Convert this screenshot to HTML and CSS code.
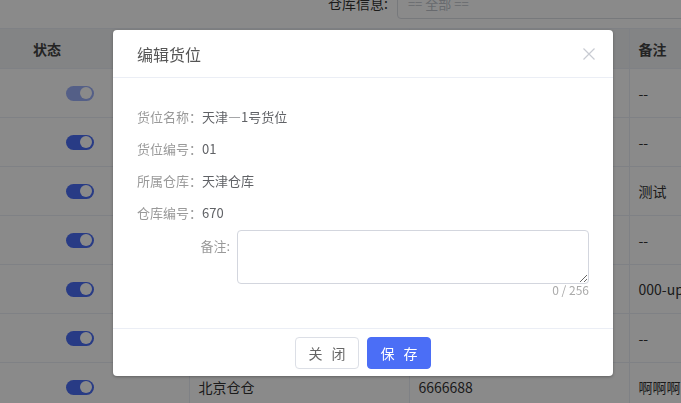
FILE: index.html
```html
<!DOCTYPE html>
<html lang="zh-CN">

<head>
	<meta charset="utf-8">
	<title>货位管理</title>
	<link rel="stylesheet" href="styles.css">
</head>

<body>
	<div class="filter-bar">
		<label class="filter-label">仓库信息:</label>
		<div class="filter-select">== 全部 ==</div>
	</div>

	<table class="grid">
		<colgroup>
			<col class="col-state">
			<col class="col-name">
			<col class="col-code">
			<col>
		</colgroup>
		<thead>
			<tr>
				<th class="state-head">状态</th>
				<th>仓库名称</th>
				<th>仓库编号</th>
				<th>备注</th>
			</tr>
		</thead>
		<tbody>
			<tr>
				<td class="state-cell"><span class="switch disabled"></span></td>
				<td>天津仓库</td>
				<td>670</td>
				<td>--</td>
			</tr>
			<tr>
				<td class="state-cell"><span class="switch"></span></td>
				<td>天津仓库</td>
				<td>670</td>
				<td>--</td>
			</tr>
			<tr>
				<td class="state-cell"><span class="switch"></span></td>
				<td>上海仓库</td>
				<td>1001</td>
				<td>测试</td>
			</tr>
			<tr>
				<td class="state-cell"><span class="switch"></span></td>
				<td>广州仓库</td>
				<td>2020</td>
				<td>--</td>
			</tr>
			<tr>
				<td class="state-cell"><span class="switch"></span></td>
				<td>深圳仓库</td>
				<td>000</td>
				<td>000-up</td>
			</tr>
			<tr>
				<td class="state-cell"><span class="switch"></span></td>
				<td>成都仓库</td>
				<td>3301</td>
				<td>--</td>
			</tr>
			<tr>
				<td class="state-cell"><span class="switch"></span></td>
				<td>北京仓仓</td>
				<td>6666688</td>
				<td>啊啊啊</td>
			</tr>
		</tbody>
	</table>

	<div class="mask"></div>

	<div class="dialog">
		<div class="dialog-header">
			<span class="dialog-title">编辑货位</span>
			<svg class="dialog-close" width="12" height="12" viewBox="0 0 12 12">
				<path d="M0.5 0.5 L11.5 11.5 M11.5 0.5 L0.5 11.5" stroke="#c8cbd2" stroke-width="1.2" fill="none"/>
			</svg>
		</div>
		<div class="dialog-body">
			<div class="info-row"><span class="info-label">货位名称：</span><span class="info-value">天津—1号货位</span></div>
			<div class="info-row"><span class="info-label">货位编号：</span><span class="info-value">01</span></div>
			<div class="info-row"><span class="info-label">所属仓库：</span><span class="info-value">天津仓库</span></div>
			<div class="info-row"><span class="info-label">仓库编号：</span><span class="info-value">670</span></div>
			<div class="form-row">
				<label class="form-label">备注:</label>
				<div class="form-field">
					<textarea class="remark"></textarea>
					<div class="word-count">0 / 256</div>
				</div>
			</div>
		</div>
		<div class="dialog-footer">
			<button class="btn">关 闭</button>
			<button class="btn btn-primary">保 存</button>
		</div>
	</div>
</body>

</html>
```

FILE: styles.css
```css
body {
	margin: 0;
	font-family: "Microsoft YaHei", "Noto Sans CJK SC", "Noto Sans", sans-serif;
	font-size: 14px;
	color: #333;
	background-color: #fff;
	overflow: hidden;
}

/* 顶部筛选 */
.filter-bar {
	display: flex;
	align-items: flex-end;
	height: 28px;
	padding-bottom: 9px;
	box-sizing: border-box;
	overflow: hidden;
	padding-left: 328px;
}

.filter-label {
	line-height: 32px;
	margin-right: 9px;
	white-space: nowrap;
}

.filter-select {
	flex: 0 0 320px;
	height: 32px;
	line-height: 32px;
	box-sizing: border-box;
	border: 1px solid #dcdfe6;
	border-radius: 4px;
	padding-left: 10px;
	color: #c0c4cc;
	font-size: 13px;
}

/* 列表 */
.grid {
	width: 100%;
	border-collapse: collapse;
	table-layout: fixed;
}

.col-state {
	width: 189px;
}

.col-name,
.col-code {
	width: 220px;
}

.grid th,
.grid td {
	border-bottom: 1px solid #ebeef5;
	border-left: 1px solid #ebeef5;
	padding: 0 9px;
	text-align: left;
	white-space: nowrap;
	overflow: hidden;
}

.grid th:first-child,
.grid td:first-child {
	border-left: none;
}

.grid th {
	height: 39px;
	background-color: #f3f4f6;
	border-top: 1px solid #ebeef5;
	font-weight: bold;
	color: #444;
}

.grid td {
	height: 48px;
	color: #333;
}

.grid .state-head {
	padding-left: 33px;
}

.grid .state-cell {
	padding-left: 66px;
}

.switch {
	display: block;
	position: relative;
	width: 28px;
	height: 15px;
	border-radius: 8px;
	background-color: #4b6ef6;
}

.switch::after {
	content: "";
	position: absolute;
	right: 2px;
	top: 1.5px;
	width: 12px;
	height: 12px;
	border-radius: 50%;
	background-color: #fff;
}

.switch.disabled {
	opacity: 0.55;
}

/* 遮罩与弹窗 */
.mask {
	position: fixed;
	inset: 0;
	background-color: rgba(0, 0, 0, 0.46);
}

.dialog {
	position: fixed;
	left: 113px;
	top: 30px;
	width: 500px;
	background-color: #fff;
	border-radius: 4px;
	box-shadow: 0 1px 3px rgba(0, 0, 0, 0.3);
}

.dialog-header {
	display: flex;
	align-items: center;
	justify-content: space-between;
	height: 47px;
	padding: 0 18px 0 24px;
	border-bottom: 1px solid #ebeef5;
}

.dialog-title {
	font-size: 16px;
	color: #555;
}

.dialog-close {
	margin-top: 1px;
}

.dialog-body {
	padding: 23px 24px 32px;
	font-size: 13px;
}

.info-row {
	line-height: 32px;
}

.info-label {
	color: #999;
}

.info-value {
	color: #606266;
}

.form-row {
	display: flex;
	margin-top: 1px;
}

.form-label {
	width: 93px;
	text-align: right;
	line-height: 32px;
	color: #999;
	margin-right: 7px;
}

.form-field {
	width: 352px;
}

.remark {
	display: block;
	width: 100%;
	height: 54px;
	box-sizing: border-box;
	border: 1px solid #d3d6de;
	border-radius: 4px;
	resize: vertical;
	font-family: inherit;
	margin: 0;
}

.word-count {
	text-align: right;
	font-size: 12px;
	line-height: 12px;
	color: #aaa;
}

.dialog-footer {
	display: flex;
	justify-content: center;
	gap: 8px;
	padding: 8px 0 7px;
	border-top: 1px solid #ebeef5;
}

.btn {
	width: 64px;
	height: 32px;
	border: 1px solid #dcdfe6;
	border-radius: 4px;
	background-color: #fff;
	color: #666;
	font-family: inherit;
	font-size: 14px;
	letter-spacing: 3px;
	padding: 0 0 0 3px;
	cursor: pointer;
}

.btn-primary {
	background-color: #4b6ef6;
	border-color: #4b6ef6;
	color: #fff;
}
```
